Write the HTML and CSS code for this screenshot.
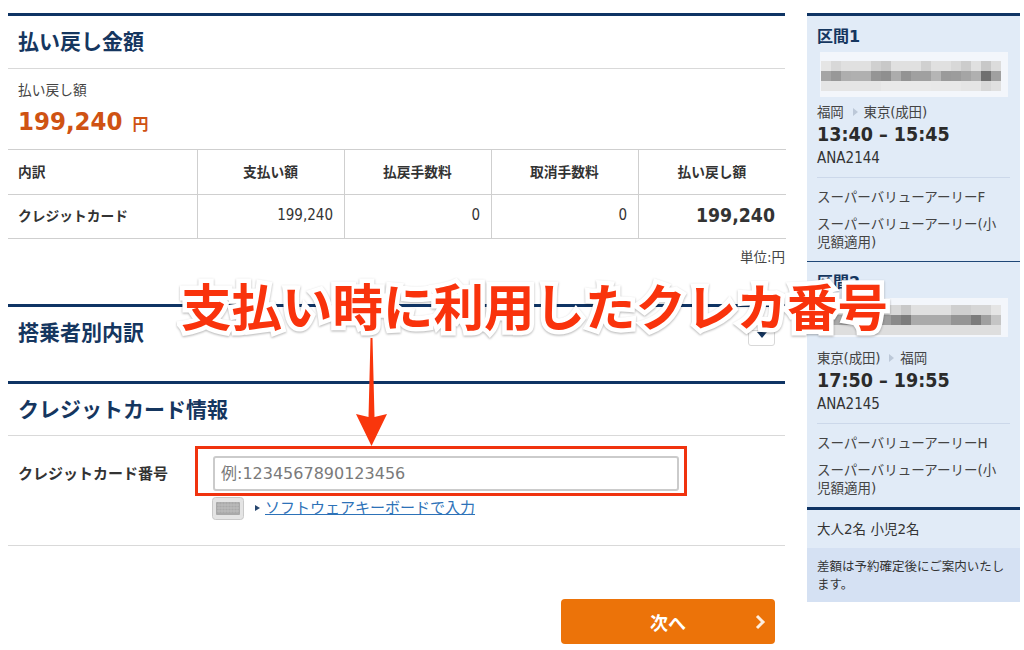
FILE: index.html
```html
<!DOCTYPE html>
<html lang="ja">
<head>
<meta charset="utf-8">
<title>払い戻し金額</title>
<link rel="stylesheet" href="styles.css">
</head>
<body>
<div class="page">
  <main class="main">
    <section class="sec">
      <h2 class="sec-title">払い戻し金額</h2>
      <div class="refund">
        <div class="refund-label">払い戻し額</div>
        <div class="refund-price">199,240 <span class="yen">円</span></div>
      </div>
      <table class="tbl">
        <tr class="head-row">
          <th class="first">内訳</th><th>支払い額</th><th>払戻手数料</th><th>取消手数料</th><th class="last">払い戻し額</th>
        </tr>
        <tr class="body-row">
          <th class="first">クレジットカード</th><td>199,240</td><td>0</td><td>0</td><td class="last total">199,240</td>
        </tr>
      </table>
      <div class="unit">単位:円</div>
    </section>

    <section class="sec sec-pax">
      <div class="sec-row">
        <h2 class="sec-title plain">搭乗者別内訳</h2>
        <button class="toggle" type="button" aria-label="開く"><span class="caret"></span></button>
      </div>
    </section>

    <section class="sec sec-card">
      <h2 class="sec-title">クレジットカード情報</h2>
      <div class="form-row">
        <div class="form-label">クレジットカード番号</div>
        <div class="form-field">
          <input class="card-input" type="text" placeholder="例:1234567890123456">
          <div class="kbd-row">
            <svg class="kbd" width="32" height="23" viewBox="0 0 32 23">
              <rect x="0.5" y="0.5" width="31" height="22" rx="3" fill="#e4e4e4" stroke="#c9c9c9"/>
              <rect x="4" y="5" width="24" height="13" rx="1" fill="#a9a9a9"/>
              <path d="M5 8h22M5 11h22M5 14h22" stroke="#c9c9c9" stroke-width="0.7"/>
              <path d="M7 5v11M10 5v11M13 5v11M16 5v11M19 5v11M22 5v11M25 5v11" stroke="#c2c2c2" stroke-width="0.6"/>
            </svg>
            <span class="tri"></span>
            <a class="kbd-link" href="#">ソフトウェアキーボードで入力</a>
          </div>
        </div>
      </div>
    </section>

    <div class="actions">
      <button class="next" type="button">
        <span>次へ</span>
        <svg class="chev" width="11" height="16" viewBox="0 0 11 16"><path d="M2 2l6 6-6 6" fill="none" stroke="#fdeee0" stroke-width="3"/></svg>
      </button>
    </div>
  </main>

  <aside class="side">
    <div class="leg">
      <h3 class="leg-title">区間1</h3>
      <svg class="mosaic" width="188" height="45" viewBox="0 0 188 45">
        <defs><filter id="b1"><feGaussianBlur stdDeviation="0.6"/></filter></defs>
        <rect width="188" height="45" fill="#f3f6fb"/>
        <g filter="url(#b1)">
          <rect x="1" y="9" width="10" height="10" fill="#e5e5e5"/><rect x="11" y="9" width="10" height="10" fill="#d8d8d8"/><rect x="21" y="9" width="10" height="10" fill="#e0e0e0"/><rect x="31" y="9" width="10" height="10" fill="#e0e0e0"/><rect x="41" y="9" width="10" height="10" fill="#e0e0e0"/><rect x="51" y="9" width="10" height="10" fill="#d0d0d0"/><rect x="61" y="9" width="10" height="10" fill="#c8c8c8"/><rect x="71" y="9" width="10" height="10" fill="#e0e0e0"/><rect x="81" y="9" width="10" height="10" fill="#e0e0e0"/><rect x="91" y="9" width="10" height="10" fill="#e0e0e0"/><rect x="101" y="9" width="10" height="10" fill="#d0d0d0"/><rect x="111" y="9" width="10" height="10" fill="#e0e0e0"/><rect x="121" y="9" width="10" height="10" fill="#e0e0e0"/><rect x="131" y="9" width="10" height="10" fill="#d8d8d8"/><rect x="141" y="9" width="10" height="10" fill="#cccccc"/><rect x="151" y="9" width="10" height="10" fill="#e0e0e0"/><rect x="161" y="9" width="10" height="10" fill="#c8c8c8"/><rect x="171" y="9" width="10" height="10" fill="#dcdcdc"/>
          <rect x="1" y="19" width="10" height="10" fill="#a5a5a5"/><rect x="11" y="19" width="10" height="10" fill="#989898"/><rect x="21" y="19" width="10" height="10" fill="#aeaeae"/><rect x="31" y="19" width="10" height="10" fill="#b0b0b0"/><rect x="41" y="19" width="10" height="10" fill="#b0b0b0"/><rect x="51" y="19" width="10" height="10" fill="#959595"/><rect x="61" y="19" width="10" height="10" fill="#8f8f8f"/><rect x="71" y="19" width="10" height="10" fill="#acacac"/><rect x="81" y="19" width="10" height="10" fill="#939393"/><rect x="91" y="19" width="10" height="10" fill="#a0a0a0"/><rect x="101" y="19" width="10" height="10" fill="#a0a0a0"/><rect x="111" y="19" width="10" height="10" fill="#b5b5b5"/><rect x="121" y="19" width="10" height="10" fill="#9a9a9a"/><rect x="131" y="19" width="10" height="10" fill="#9c9c9c"/><rect x="141" y="19" width="10" height="10" fill="#a5a5a5"/><rect x="151" y="19" width="10" height="10" fill="#b0b0b0"/><rect x="161" y="19" width="10" height="10" fill="#707070"/><rect x="171" y="19" width="10" height="10" fill="#a0a0a0"/>
          <rect x="1" y="29" width="10" height="10" fill="#e5e5e5"/><rect x="11" y="29" width="50" height="10" fill="#e5e5e5"/><rect x="61" y="29" width="50" height="10" fill="#e9e9e9"/><rect x="111" y="29" width="30" height="10" fill="#e8e8e8"/><rect x="141" y="29" width="20" height="10" fill="#e5e5e5"/><rect x="161" y="29" width="10" height="10" fill="#d8d8d8"/><rect x="171" y="29" width="10" height="10" fill="#e0e0e0"/>
        </g>
      </svg>
      <div class="route">福岡<span class="route-tri"></span>東京(成田)</div>
      <div class="time">13:40 – 15:45</div>
      <div class="flight">ANA2144</div>
      <div class="fares">
        <p class="fare">スーパーバリューアーリーF</p>
        <p class="fare">スーパーバリューアーリー(小児額適用)</p>
      </div>
    </div>
    <div class="leg">
      <h3 class="leg-title">区間2</h3>
      <svg class="mosaic short" width="188" height="39" viewBox="0 0 188 39">
        <rect width="188" height="39" fill="#f3f6fb"/>
        <g filter="url(#b1)">
          <rect x="1" y="7" width="60" height="10" fill="#e2e2e2"/><rect x="61" y="7" width="20" height="10" fill="#d8d8d8"/><rect x="81" y="7" width="10" height="10" fill="#c8c8c8"/><rect x="91" y="7" width="40" height="10" fill="#e0e0e0"/><rect x="131" y="7" width="20" height="10" fill="#cfcfcf"/><rect x="151" y="7" width="20" height="10" fill="#d6d6d6"/><rect x="171" y="7" width="10" height="10" fill="#e5e5e5"/>
          <rect x="1" y="17" width="60" height="10" fill="#a8a8a8"/><rect x="61" y="17" width="10" height="10" fill="#9c9c9c"/><rect x="71" y="17" width="10" height="10" fill="#8a8a8a"/><rect x="81" y="17" width="10" height="10" fill="#7c7c7c"/><rect x="91" y="17" width="40" height="10" fill="#aaaaaa"/><rect x="131" y="17" width="20" height="10" fill="#959595"/><rect x="151" y="17" width="10" height="10" fill="#7c7c7c"/><rect x="161" y="17" width="10" height="10" fill="#a0a0a0"/><rect x="171" y="17" width="10" height="10" fill="#c5c5c5"/>
          <rect x="1" y="27" width="180" height="10" fill="#dedede"/>
        </g>
      </svg>
      <div class="route">東京(成田)<span class="route-tri"></span>福岡</div>
      <div class="time">17:50 – 19:55</div>
      <div class="flight">ANA2145</div>
      <div class="fares">
        <p class="fare">スーパーバリューアーリーH</p>
        <p class="fare">スーパーバリューアーリー(小児額適用)</p>
      </div>
    </div>
    <div class="pax">大人2名 小児2名</div>
    <div class="note">差額は予約確定後にご案内いたします。</div>
  </aside>

  <div class="callout">支払い時に利用したクレカ番号</div>
  <svg class="arrow" width="34" height="110" viewBox="0 0 34 110">
    <path d="M16.500 0h2l2 79 12.500-3L17.500 108 2 76l12.500 3z" fill="#f9360c"/>
  </svg>
  <div class="redbox"></div>
</div>
</body>
</html>
```

FILE: styles.css
```css
* { box-sizing: border-box; }
html, body { margin: 0; padding: 0; background: #fff; }
body {
  font-family: "DejaVu Sans", "Noto Sans CJK JP", sans-serif;
  color: #333;
}
.page {
  position: relative;
  width: 1024px;
  height: 650px;
  overflow: hidden;
  display: flex;
  align-items: flex-start;
  gap: 22px;
  padding: 13px 4px 0 8px;
}
.main { width: 777px; flex: none; }
.side { width: 213px; flex: none; background: #e1ebf7; border-top: 3px solid #0f3464; }

.sec { border-top: 3px solid #0f3464; }
.sec-title {
  margin: 0;
  height: 53px;
  padding-left: 10px;
  font-size: 21px;
  line-height: 53px;
  font-weight: 700;
  color: #15365f;
  border-bottom: 1px solid #d9d9d9;
}
.sec-title.plain { border-bottom: 0; }

.refund { height: 80px; padding: 11px 0 0 10px; }
.refund-label { font-size: 13.75px; line-height: 20px; color: #444; }
.refund-price {
  margin-top: 5px;
  font-family: "DejaVu Sans Condensed", "DejaVu Sans", "Noto Sans CJK JP", sans-serif;
  font-size: 25.5px;
  line-height: 33px;
  font-weight: 700;
  color: #cf5213;
  white-space: nowrap;
}
.yen { margin-left: 2px; font-size: 16px; font-family: "Noto Sans CJK JP", sans-serif; }

.tbl {
  width: 777px;
  table-layout: fixed;
  border-collapse: separate;
  border-spacing: 0;
  border-top: 1px solid #cfcfcf;
  font-size: 13.75px;
}
.tbl th, .tbl td {
  width: 147px;
  height: 44px;
  padding: 0 11px 0 10px;
  border-right: 1px solid #cfcfcf;
  border-bottom: 1px solid #cfcfcf;
  color: #333;
}
.tbl .head-row th { height: 45px; padding-bottom: 2px; }
.tbl .body-row th, .tbl .body-row td { padding-bottom: 3px; }
.tbl th { text-align: center; font-weight: 700; }
.tbl td {
  text-align: right;
  font-family: "DejaVu Sans Condensed", "DejaVu Sans", sans-serif;
  font-size: 15px;
}
.tbl .first { width: 190px; text-align: left; }
.tbl .last { border-right: 0; }
.tbl .total { font-size: 19.3px; font-weight: 700; }

.unit {
  height: 65px;
  padding-top: 8px;
  text-align: right;
  font-size: 13.5px;
  line-height: 20px;
  color: #444;
}
.sec-pax { height: 77px; }
.sec-row { display: flex; justify-content: space-between; align-items: flex-start; }
.sec-pax .sec-title { line-height: 52px; }
.toggle {
  width: 27px;
  height: 16px;
  margin: 23px 10px 0 0;
  padding: 1px 0 0;
  background: #fff;
  border: 1px solid #d8d8d8;
  border-radius: 3px;
  display: flex;
  justify-content: center;
  align-items: flex-start;
}
.caret {
  width: 0; height: 0;
  border-left: 5px solid transparent;
  border-right: 5px solid transparent;
  border-top: 6px solid #15365f;
}

.sec-card { height: 165px; border-bottom: 1px solid #d9d9d9; }
.sec-card .sec-title { height: 52px; }
.form-row { display: flex; padding: 20px 0 0 10px; }
.form-label { width: 195px; font-size: 15px; font-weight: 700; line-height: 36px; flex: none; white-space: nowrap; }
.card-input {
  display: block;
  width: 466px;
  height: 35px;
  padding: 0 6px;
  background: #fff;
  border: 2px solid #cbcbcb;
  border-radius: 3px;
  font-family: "DejaVu Sans", "Noto Sans CJK JP", sans-serif;
  font-size: 16px;
  outline: none;
}
.card-input::placeholder { color: #7a7a7a; opacity: 1; }
.kbd-row { display: flex; align-items: center; margin-top: 5px; margin-left: -1px; height: 24px; }
.kbd { flex: none; display: block; }
.tri {
  width: 0; height: 0;
  margin: 0 5px 0 11px;
  border-top: 3.5px solid transparent;
  border-bottom: 3.5px solid transparent;
  border-left: 5px solid #27466f;
}
.kbd-link { font-size: 15px; line-height: 22px; color: #2d72b8; text-decoration: underline; white-space: nowrap; }

.actions { display: flex; justify-content: flex-end; padding: 53px 10px 0 0; }
.next {
  position: relative;
  width: 214px;
  height: 45px;
  border: 0;
  border-radius: 4px;
  background: #ec7309;
  color: #fff;
  font-family: "DejaVu Sans", "Noto Sans CJK JP", sans-serif;
  font-size: 18px;
  font-weight: 700;
  display: flex;
  align-items: center;
  justify-content: center;
}
.chev { position: absolute; right: 9px; top: 15px; }

.leg { height: 246px; padding: 8px 10px 0; border-bottom: 1px solid #1f4777; }
.leg + .leg { height: 248px; border-bottom: 3px solid #0f3464; }
.leg-title { margin: 0; font-size: 16px; line-height: 26px; font-weight: 700; color: #15365f; }
.mosaic { display: block; margin: 2px 0 0 3px; }
.mosaic.short { margin-bottom: 11px; }
.route { margin-top: 5px; font-size: 13.5px; line-height: 20px; color: #444; white-space: nowrap; letter-spacing: -0.2px; }
.route-tri {
  display: inline-block;
  width: 0; height: 0;
  margin: 0 6px 1px 9px;
  border-top: 4px solid transparent;
  border-bottom: 4px solid transparent;
  border-left: 5px solid #bcc8d8;
}
.time {
  font-family: "DejaVu Sans Condensed", "DejaVu Sans", sans-serif;
  font-size: 19.5px;
  line-height: 26px;
  font-weight: 700;
  color: #2b2b2b;
  white-space: nowrap;
}
.flight {
  font-family: "DejaVu Sans Condensed", "DejaVu Sans", sans-serif;
  font-size: 15px;
  line-height: 20px;
  color: #333;
}
.fares { margin-top: 9px; padding-top: 10px; border-top: 1px solid #ccd8ea; }
.fare { margin: 0 0 9px; padding-right: 8px; font-size: 13.5px; line-height: 18px; color: #444; }

.pax { height: 38px; padding-left: 10px; font-size: 13.5px; line-height: 38px; color: #333; }
.note { height: 54px; padding: 10px 10px 0; background: #d5e1f3; font-size: 12.5px; line-height: 18px; color: #333; }

.callout {
  position: absolute;
  left: 181px;
  top: 266px;
  font-family: "Noto Sans CJK JP", sans-serif;
  font-size: 50.5px;
  font-weight: 700;
  line-height: 76px;
  white-space: nowrap;
  color: #f9330c;
  -webkit-text-stroke: 9px #fff;
  paint-order: stroke fill;
  filter: drop-shadow(0 1px 1px rgba(0, 0, 0, 0.3));
}
.arrow { position: absolute; left: 354px; top: 338px; overflow: visible; }
.redbox {
  position: absolute;
  left: 195px;
  top: 446px;
  width: 492px;
  height: 50px;
  border: 3px solid #f0330f;
}
```
